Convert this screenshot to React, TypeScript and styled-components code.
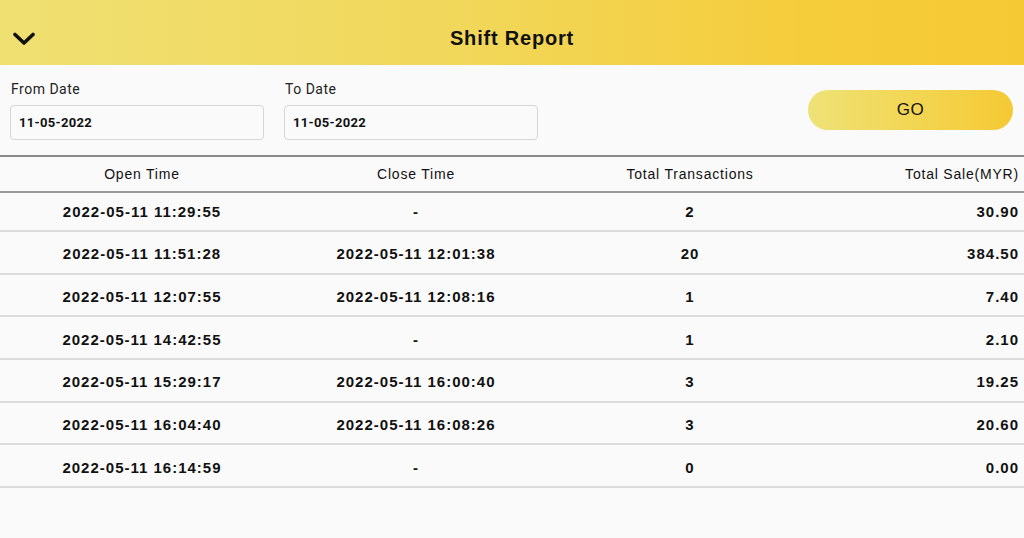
import React from "react";
import styled, { createGlobalStyle } from "styled-components";

const Global = createGlobalStyle`
  html, body { margin: 0; padding: 0; background: #fafafa; }
  body { font-family: "Liberation Sans", Arial, sans-serif; color: #111; }
`;

const Page = styled.div`
  width: 1024px;
  height: 538px;
  background: #fafafa;
  overflow: hidden;
  display: flex;
  flex-direction: column;
`;

const Header = styled.header`
  height: 65px;
  box-sizing: border-box;
  padding-top: 12px;
  background: linear-gradient(90deg, #efe072 0%, #f1d75a 45%, #f5cc3a 80%, #f5c934 100%);
  display: grid;
  grid-template-columns: 60px 1fr 60px;
  align-items: center;
`;

const BackButton = styled.button`
  border: 0;
  background: transparent;
  padding: 0 0 0 12px;
  display: flex;
  align-items: center;
  cursor: pointer;
`;

const Title = styled.h1`
  margin: 0;
  text-align: center;
  font-family: "Liberation Sans", Arial, sans-serif;
  font-weight: 700;
  font-size: 20px;
  letter-spacing: 0.8px;
  color: #111;
`;

const FilterBar = styled.div`
  display: flex;
  align-items: flex-start;
  padding: 16px 11px 0 10px;
  height: 92px;
  box-sizing: border-box;
  border-bottom: 2px solid #8a8a8a;
`;

const Field = styled.div`
  display: flex;
  flex-direction: column;
  width: 254px;
  margin-right: 20px;
`;

const Label = styled.label`
  font-family: Roboto, "Liberation Sans", sans-serif;
  font-size: 14px;
  letter-spacing: 0.5px;
  color: #222;
  margin: 0 0 8px 1px;
  line-height: 16px;
`;

const DateBox = styled.div`
  height: 35px;
  box-sizing: border-box;
  border: 1.5px solid #d6d6d6;
  border-radius: 4px;
  background: #fafafa;
  display: flex;
  align-items: center;
  padding-left: 8px;
  font-family: Roboto, "Liberation Sans", sans-serif;
  font-weight: 700;
  font-size: 13px;
  letter-spacing: 0.3px;
  color: #111;
`;

const GoButton = styled.button`
  margin-left: auto;
  margin-top: 9px;
  width: 205px;
  height: 40px;
  border: 0;
  border-radius: 20px;
  background: linear-gradient(90deg, #eee277 0%, #f2d550 55%, #f5c934 100%);
  font-family: "Liberation Sans", Arial, sans-serif;
  font-size: 17px;
  letter-spacing: 0.5px;
  color: #111;
  cursor: pointer;
`;

const Table = styled.div`
  display: flex;
  flex-direction: column;
`;

const Row = styled.div<{ $head?: boolean; $first?: boolean }>`
  display: grid;
  grid-template-columns: 284px 264px 284px 1fr;
  align-items: center;
  box-sizing: border-box;
  height: ${(p) => (p.$head ? "36px" : p.$first ? "39px" : "42.67px")};
  padding-top: ${(p) => (p.$head || p.$first ? "0" : "3px")};
  border-bottom: 2px solid ${(p) => (p.$head ? "#9a9a9a" : "#dcdcdc")};
  font-family: "Liberation Sans", Arial, sans-serif;
  font-size: ${(p) => (p.$head ? "14px" : "15px")};
  letter-spacing: ${(p) => (p.$head ? "0.8px" : "1px")};
  font-weight: ${(p) => (p.$head ? 400 : 700)};
  color: #111;
`;

const Cell = styled.div<{ $right?: boolean }>`
  text-align: ${(p) => (p.$right ? "right" : "center")};
  padding-right: ${(p) => (p.$right ? "5px" : "0")};
`;

const rows = [
  ["2022-05-11 11:29:55", "-", "2", "30.90"],
  ["2022-05-11 11:51:28", "2022-05-11 12:01:38", "20", "384.50"],
  ["2022-05-11 12:07:55", "2022-05-11 12:08:16", "1", "7.40"],
  ["2022-05-11 14:42:55", "-", "1", "2.10"],
  ["2022-05-11 15:29:17", "2022-05-11 16:00:40", "3", "19.25"],
  ["2022-05-11 16:04:40", "2022-05-11 16:08:26", "3", "20.60"],
  ["2022-05-11 16:14:59", "-", "0", "0.00"],
];

export default function App() {
  return (
    <Page>
      <Global />
      <Header>
        <BackButton aria-label="back">
          <svg width="24" height="14" viewBox="0 0 24 14">
            <path d="M3 2.5 L12 11 L21 2.5" fill="none" stroke="#111" strokeWidth="3.6" strokeLinecap="round" strokeLinejoin="round" />
          </svg>
        </BackButton>
        <Title>Shift Report</Title>
        <span />
      </Header>
      <FilterBar>
        <Field>
          <Label>From Date</Label>
          <DateBox>11-05-2022</DateBox>
        </Field>
        <Field>
          <Label>To Date</Label>
          <DateBox>11-05-2022</DateBox>
        </Field>
        <GoButton>GO</GoButton>
      </FilterBar>
      <Table>
        <Row $head>
          <Cell>Open Time</Cell>
          <Cell>Close Time</Cell>
          <Cell>Total Transactions</Cell>
          <Cell $right>Total Sale(MYR)</Cell>
        </Row>
        {rows.map((r, i) => (
          <Row key={i} $first={i === 0}>
            <Cell>{r[0]}</Cell>
            <Cell>{r[1]}</Cell>
            <Cell>{r[2]}</Cell>
            <Cell $right>{r[3]}</Cell>
          </Row>
        ))}
      </Table>
    </Page>
  );
}
